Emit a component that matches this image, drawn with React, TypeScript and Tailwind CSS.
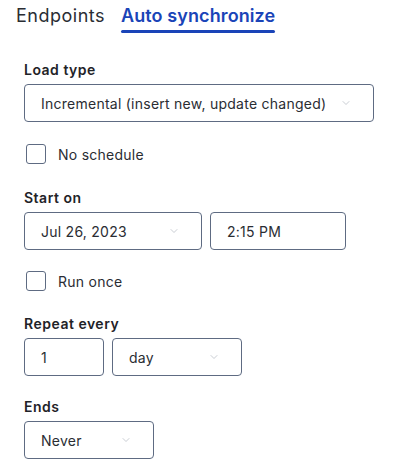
import { ChevronDown } from "lucide-react";

const font = { fontFamily: "Inter, 'Liberation Sans', sans-serif" };

const Label = ({ children }: { children: React.ReactNode }) => (
  <div className="text-[14px] font-semibold leading-[18px] tracking-[0.5px] text-[#1f2328] mb-[5px]">{children}</div>
);

const Select = ({ value, width }: { value: string; width: string }) => (
  <div className={`flex items-center justify-between h-[38px] rounded-[4px] border border-[#5e6b82] pl-[16px] pr-[21px] text-[14px] tracking-[0.25px] text-[#2a2d33] ${width}`}>
    <span>{value}</span>
    <ChevronDown className="w-[12px] h-[12px] text-[#a9afb9]" strokeWidth={1.25} />
  </div>
);

const Checkbox = ({ label }: { label: string }) => (
  <div className="flex items-center gap-[12px] pl-[2px] h-[20px]">
    <div className="w-[20px] h-[20px] rounded-[3px] border-[1.5px] border-[#5e6b82] bg-white" />
    <span className="text-[14px] tracking-[0.25px] text-[#2a2d33]">{label}</span>
  </div>
);

const App = () => {
  return (
    <div className="w-[401px] h-[473px] bg-white overflow-hidden" style={font}>
      {/* Tabs */}
      <div className="flex gap-[16px] pl-[16px] pt-[4px]">
        <div className="text-[18px] leading-[24px] tracking-[0.5px] text-[#2a2d33]">Endpoints</div>
        <div className="flex flex-col">
          <div className="text-[18px] leading-[24px] font-semibold tracking-[0.1px] text-[#1a44b8]">Auto synchronize</div>
          <div className="h-[3px] mt-[2px] bg-[#1a44b8] rounded-full" />
        </div>
      </div>

      <div className="px-[24px] pt-[28px]">
        <Label>Load type</Label>
        <Select value="Incremental (insert new, update changed)" width="w-[350px]" />

        <div className="mt-[22px]">
          <Checkbox label="No schedule" />
        </div>

        <div className="mt-[25px]">
          <Label>Start on</Label>
          <div className="flex gap-[8px]">
            <Select value="Jul 26, 2023" width="w-[178px]" />
            <div className="flex items-center h-[38px] w-[136px] rounded-[4px] border border-[#5e6b82] pl-[16px] text-[14px] tracking-[0.25px] text-[#2a2d33]">
              2:15 PM
            </div>
          </div>
        </div>

        <div className="mt-[21px]">
          <Checkbox label="Run once" />
        </div>

        <div className="mt-[24px]">
          <Label>Repeat every</Label>
          <div className="flex gap-[8px]">
            <div className="flex items-center h-[38px] w-[80px] rounded-[4px] border border-[#5e6b82] pl-[16px] text-[14px] text-[#2a2d33]">
              1
            </div>
            <Select value="day" width="w-[130px]" />
          </div>
        </div>

        <div className="mt-[22px]">
          <Label>Ends</Label>
          <Select value="Never" width="w-[130px]" />
        </div>
      </div>
    </div>
  );
};

export default App;
